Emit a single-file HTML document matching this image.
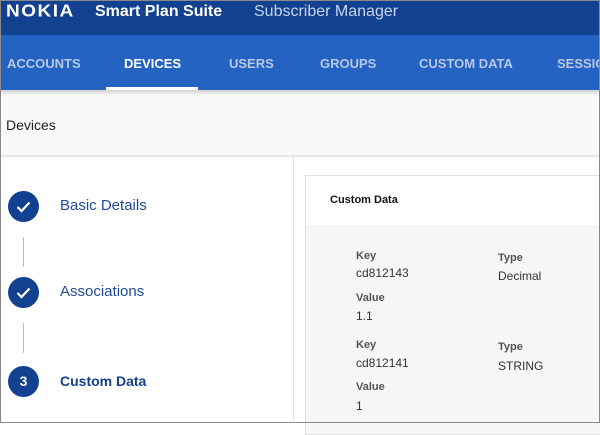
<!DOCTYPE html>
<html><head><style>
*{margin:0;padding:0;box-sizing:border-box}
body{width:600px;height:423px;overflow:hidden;font-family:"Liberation Sans",sans-serif;background:#fff;position:relative}
.frame{position:absolute;inset:0;border:1px solid #8a8a8a;z-index:10;pointer-events:none}
.top{position:absolute;left:0;top:0;width:600px;height:35px;background:#124191}
.nav{position:absolute;left:0;top:35px;width:600px;height:55px;background:#2563c2}
.nav span{position:absolute;top:21px;font-size:13px;font-weight:bold;color:#b8c8e8}
.t{position:absolute;white-space:nowrap}
.sub{position:absolute;left:0;top:90px;width:600px;height:65px;background:#f9f9f9;box-shadow:inset 0 4px 4px -2px rgba(0,0,0,.2)}
.c{position:absolute;left:8px;width:31px;height:31px;border-radius:50%;background:#124191;color:#fff;text-align:center;line-height:31px;font-weight:bold;font-size:14px}
.ln{position:absolute;left:23px;width:1px;height:30px;background:#bbb}
.lab{font-size:11px;font-weight:bold;color:#555}
.val{font-size:12px;color:#333}
</style></head><body>
<div class="top">
<div class="t" style="left:6px;top:1px;font-size:19px;font-weight:900;color:#fff;letter-spacing:1.5px;transform:scaleY(0.9)">NOKIA</div>
<div class="t" style="left:95px;top:3px;font-size:16px;font-weight:bold;color:#fff">Smart Plan Suite</div>
<div class="t" style="left:254px;top:3px;font-size:16px;color:#c8d4ec">Subscriber Manager</div>
</div>
<div class="nav">
<span style="left:7px">ACCOUNTS</span>
<span style="left:124px;color:#fff">DEVICES</span>
<span style="left:229px">USERS</span>
<span style="left:320px">GROUPS</span>
<span style="left:419px">CUSTOM DATA</span>
<span style="left:557px">SESSIONS</span>
<div style="position:absolute;left:106px;top:52px;width:92px;height:3px;background:#fff"></div>
</div>
<div class="sub"><div class="t" style="left:6px;top:27px;font-size:14px;color:#222">Devices</div></div>
<div style="position:absolute;left:0;top:155px;width:600px;height:3px;background:linear-gradient(#ddd,#fff)"></div>
<div style="position:absolute;left:293px;top:155px;width:1px;height:268px;background:#e2e2e2"></div>
<div class="c" style="top:191px"><svg width="31" height="31"><path d="M9.5 16l4 4 8-8.5" stroke="#fff" stroke-width="2.2" fill="none"/></svg></div>
<div class="ln" style="top:237px"></div>
<div class="c" style="top:277px"><svg width="31" height="31"><path d="M9.5 16l4 4 8-8.5" stroke="#fff" stroke-width="2.2" fill="none"/></svg></div>
<div class="ln" style="top:323px"></div>
<div class="c" style="top:366px">3</div>
<div class="t" style="left:60px;top:197px;font-size:15px;color:#1f4a9a">Basic Details</div>
<div class="t" style="left:60px;top:283px;font-size:15px;color:#1f4a9a">Associations</div>
<div class="t" style="left:60px;top:373px;font-size:14px;font-weight:bold;color:#124191">Custom Data</div>
<div style="position:absolute;left:305px;top:175px;width:300px;height:260px;border:1px solid #e2e2e2;background:#f6f6f6">
<div style="height:49px;background:#fff;padding:18px 0 0 24px;font-size:11px;font-weight:bold;color:#111">Custom Data</div>
</div>
<div class="t lab" style="left:356px;top:250px">Key</div>
<div class="t val" style="left:356px;top:266px">cd812143</div>
<div class="t lab" style="left:356px;top:292px">Value</div>
<div class="t val" style="left:356px;top:309px">1.1</div>
<div class="t lab" style="left:356px;top:339px">Key</div>
<div class="t val" style="left:356px;top:356px">cd812141</div>
<div class="t lab" style="left:356px;top:381px">Value</div>
<div class="t val" style="left:356px;top:399px">1</div>
<div class="t lab" style="left:498px;top:252px">Type</div>
<div class="t val" style="left:498px;top:269px">Decimal</div>
<div class="t lab" style="left:498px;top:341px">Type</div>
<div class="t val" style="left:498px;top:359px">STRING</div>
<div class="frame"></div>
</body></html>
